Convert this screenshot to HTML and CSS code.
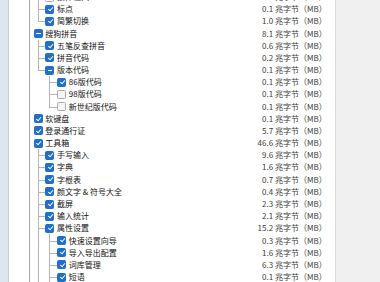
FILE: index.html
```html
<!DOCTYPE html>
<html lang="zh-CN">
<head>
<meta charset="utf-8">
<title>组件</title>
<link rel="stylesheet" href="styles.css">
</head>
<body>
<div class="app">
  <div class="side"></div>
  <div class="gutter"></div>
  <div class="tree">
    <div class="list">
      <div class="row"><span class="g t"></span><span class="cb"></span><span class="name">繁体输入</span><span class="size">0.1 兆字节（MB）</span></div>
      <div class="row"><span class="g t"></span><span class="cb on"></span><span class="name">标点</span><span class="size">0.1 兆字节（MB）</span></div>
      <div class="row"><span class="g l"></span><span class="cb on"></span><span class="name">简繁切换</span><span class="size">1.0 兆字节（MB）</span></div>
      <div class="row"><span class="cb part"></span><span class="name">搜狗拼音</span><span class="size">8.1 兆字节（MB）</span></div>
      <div class="row"><span class="g t"></span><span class="cb on"></span><span class="name">五笔反查拼音</span><span class="size">0.6 兆字节（MB）</span></div>
      <div class="row"><span class="g t"></span><span class="cb on"></span><span class="name">拼音代码</span><span class="size">0.2 兆字节（MB）</span></div>
      <div class="row"><span class="g l"></span><span class="cb part"></span><span class="name">版本代码</span><span class="size">0.1 兆字节（MB）</span></div>
      <div class="row"><span class="g"></span><span class="g t"></span><span class="cb on"></span><span class="name">86版代码</span><span class="size">0.1 兆字节（MB）</span></div>
      <div class="row"><span class="g"></span><span class="g t"></span><span class="cb"></span><span class="name">98版代码</span><span class="size">0.1 兆字节（MB）</span></div>
      <div class="row"><span class="g"></span><span class="g l"></span><span class="cb"></span><span class="name">新世纪版代码</span><span class="size">0.1 兆字节（MB）</span></div>
      <div class="row"><span class="cb on"></span><span class="name">软键盘</span><span class="size">0.1 兆字节（MB）</span></div>
      <div class="row"><span class="cb on"></span><span class="name">登录通行证</span><span class="size">5.7 兆字节（MB）</span></div>
      <div class="row"><span class="cb on"></span><span class="name">工具箱</span><span class="size">46.6 兆字节（MB）</span></div>
      <div class="row"><span class="g t"></span><span class="cb on"></span><span class="name">手写输入</span><span class="size">9.6 兆字节（MB）</span></div>
      <div class="row"><span class="g t"></span><span class="cb on"></span><span class="name">字典</span><span class="size">1.6 兆字节（MB）</span></div>
      <div class="row"><span class="g t"></span><span class="cb on"></span><span class="name">字根表</span><span class="size">0.7 兆字节（MB）</span></div>
      <div class="row"><span class="g t"></span><span class="cb on"></span><span class="name">颜文字 &amp; 符号大全</span><span class="size">0.4 兆字节（MB）</span></div>
      <div class="row"><span class="g t"></span><span class="cb on"></span><span class="name">截屏</span><span class="size">2.3 兆字节（MB）</span></div>
      <div class="row"><span class="g t"></span><span class="cb on"></span><span class="name">输入统计</span><span class="size">2.1 兆字节（MB）</span></div>
      <div class="row"><span class="g t"></span><span class="cb on"></span><span class="name">属性设置</span><span class="size">15.2 兆字节（MB）</span></div>
      <div class="row"><span class="g v"></span><span class="g t"></span><span class="cb on"></span><span class="name">快速设置向导</span><span class="size">0.3 兆字节（MB）</span></div>
      <div class="row"><span class="g v"></span><span class="g t"></span><span class="cb on"></span><span class="name">导入导出配置</span><span class="size">1.6 兆字节（MB）</span></div>
      <div class="row"><span class="g v"></span><span class="g t"></span><span class="cb on"></span><span class="name">词库管理</span><span class="size">6.3 兆字节（MB）</span></div>
      <div class="row"><span class="g v"></span><span class="g t"></span><span class="cb on"></span><span class="name">短语</span><span class="size">0.1 兆字节（MB）</span></div>
    </div>
  </div>
  <div class="pane"></div>
</div>
</body>
</html>
```

FILE: styles.css
```css
html, body {
  margin: 0;
  padding: 0;
  background: #ffffff;
}

.app {
  display: flex;
  width: 380px;
  height: 282px;
  overflow: hidden;
  font-family: "Noto Sans CJK SC", "Noto Sans", sans-serif;
  font-size: 8px;
}

.side {
  flex: none;
  width: 8px;
  background: #dfe5ee;
  border-right: 1px solid #c3ccd8;
}

.gutter {
  flex: none;
  width: 20px;
  background: #ffffff;
  border-right: 1px solid #a6a6a6;
}

.tree {
  flex: none;
  width: 305px;
  overflow: hidden;
  background: #ffffff;
}

.list {
  margin-top: -9px;
  padding-left: 3.7px;
}

.row {
  display: flex;
  align-items: center;
  height: 12.18px;
  color: #111111;
}

.g {
  flex: none;
  align-self: stretch;
  width: 11.8px;
  position: relative;
}

.g.v::before,
.g.t::before,
.g.l::before {
  content: "";
  position: absolute;
  left: 4px;
  top: 0;
  bottom: 0;
  width: 1px;
  background: #b4b4b4;
}

.g.l::before {
  bottom: 50%;
}

.g.t::after,
.g.l::after {
  content: "";
  position: absolute;
  left: 4px;
  right: 0;
  top: 50%;
  height: 1px;
  background: #b4b4b4;
}

.cb {
  flex: none;
  position: relative;
  width: 9px;
  height: 9px;
  box-sizing: border-box;
  border: 1px solid #a9a9a9;
  background: #f6f6f6;
  border-radius: 1.5px;
  margin-right: 2.5px;
}

.cb.on,
.cb.part {
  background: #1f6fcb;
  border-color: #1f6fcb;
}

.cb.on::after {
  content: "";
  position: absolute;
  left: 2.3px;
  top: 0.3px;
  width: 2.2px;
  height: 4.4px;
  border: solid #ffffff;
  border-width: 0 1.2px 1.2px 0;
  transform: rotate(40deg);
}

.cb.part::after {
  content: "";
  position: absolute;
  left: 1.2px;
  right: 1.2px;
  top: 3px;
  height: 1.2px;
  background: #ffffff;
}

.name {
  flex: 1;
  white-space: nowrap;
  line-height: 1;
}

.size {
  flex: none;
  padding-right: 8.3px;
  color: #3c3c3c;
  white-space: nowrap;
  line-height: 1;
}

.pane {
  flex: 1;
  background: #f0f0f0;
  border-left: 1px solid #dcdcdc;
}
```
